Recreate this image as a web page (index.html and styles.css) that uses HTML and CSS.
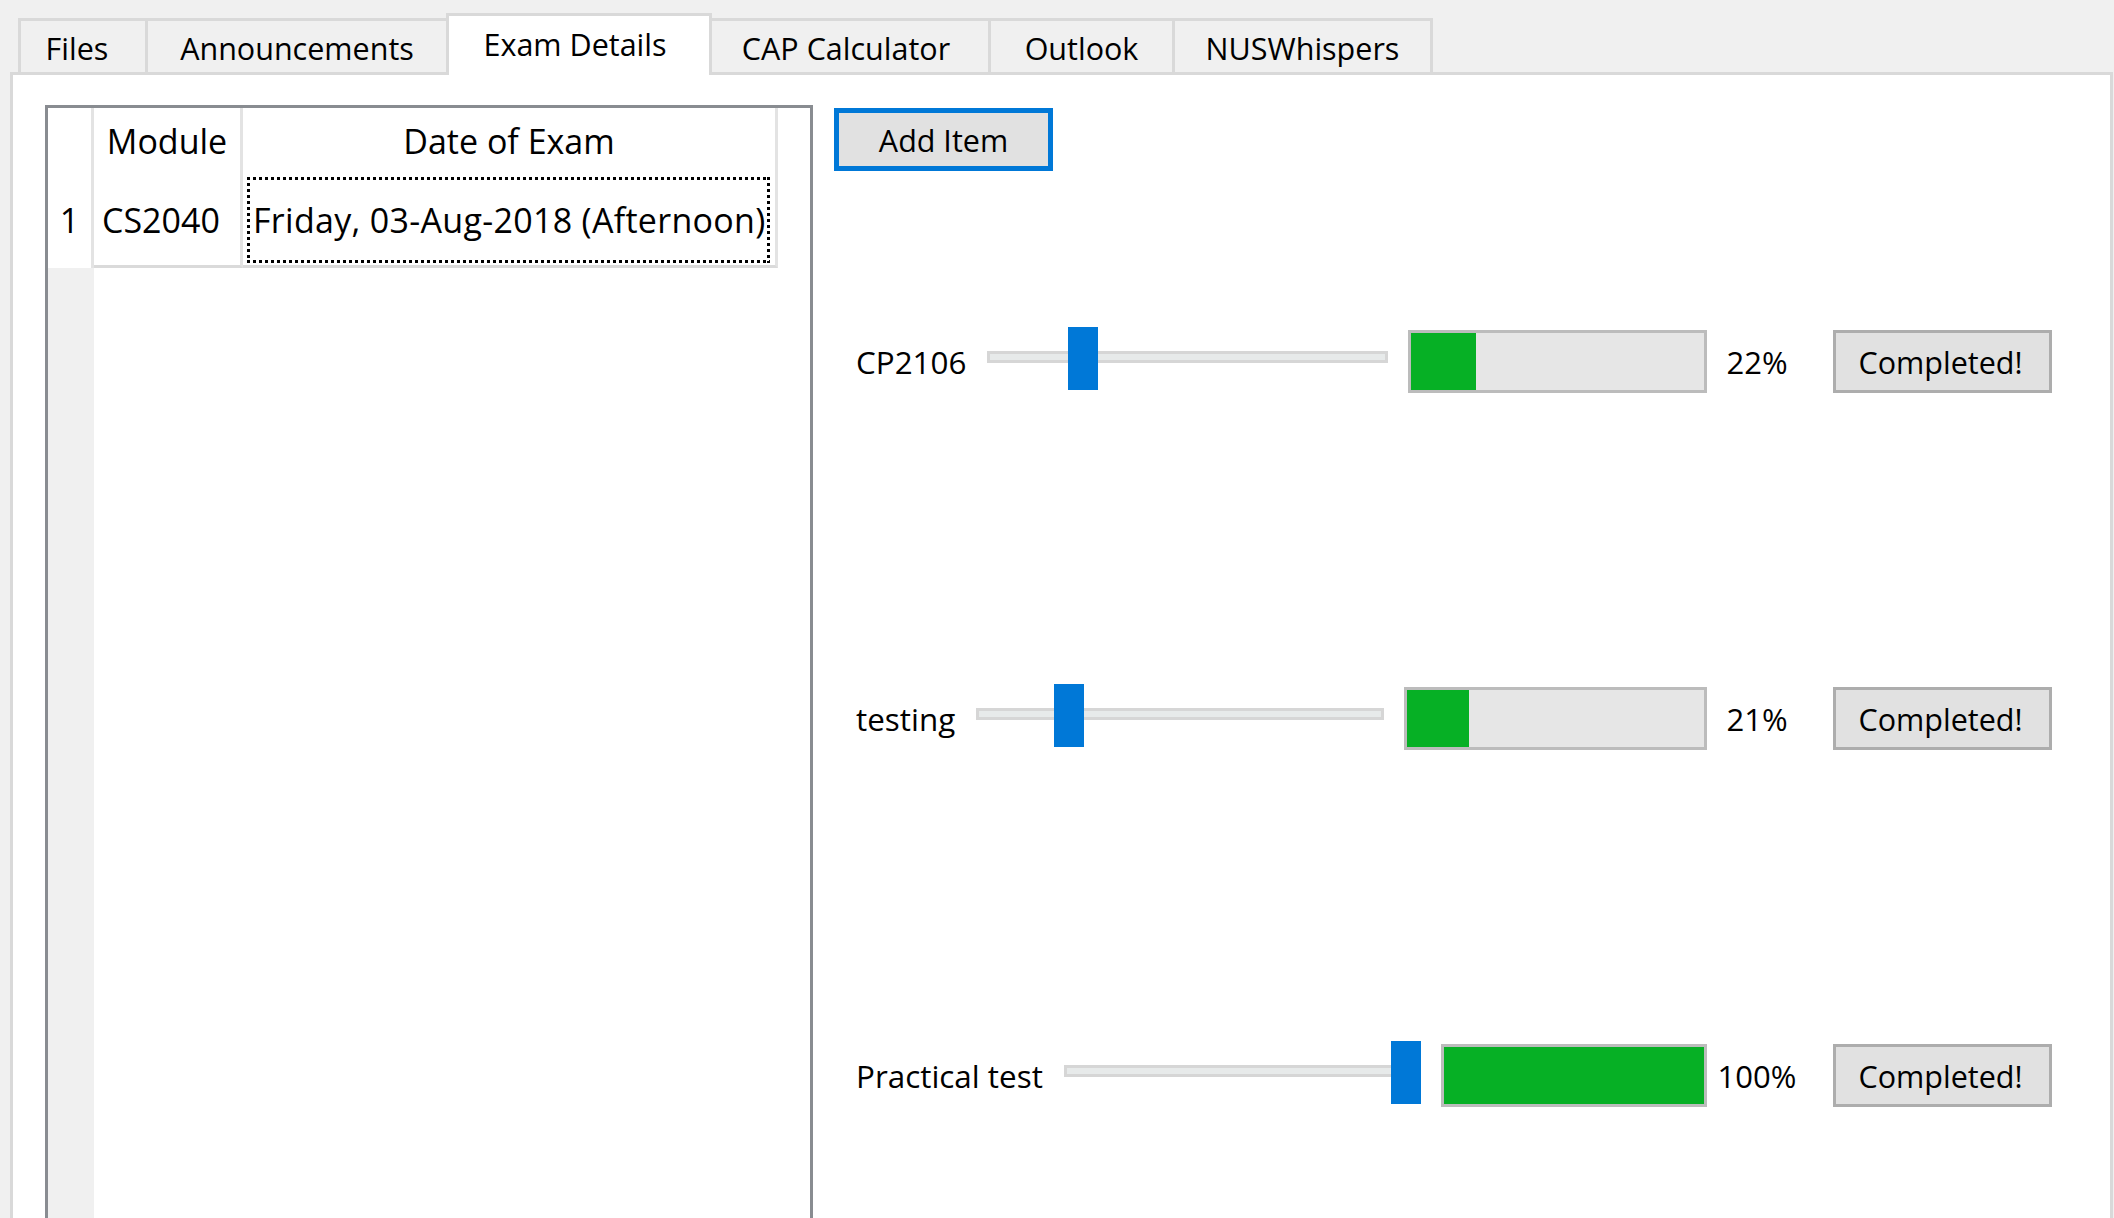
FILE: index.html
```html
<!DOCTYPE html>
<html>
<head>
<meta charset="utf-8">
<title>Exam Details</title>
<link rel="stylesheet" href="styles.css">
</head>
<body>
<div class="tabbar">
  <div class="tab t-files">Files</div>
  <div class="tab t-ann">Announcements</div>
  <div class="tab active t-exam">Exam Details</div>
  <div class="tab t-cap">CAP Calculator</div>
  <div class="tab t-out">Outlook</div>
  <div class="tab t-nus">NUSWhispers</div>
</div>
<div class="panel">
  <div class="table">
    <div class="cell hcell"></div>
    <div class="cell hcell hdr">Module</div>
    <div class="cell hcell hdr">Date of Exam</div>
    <div class="cell"></div>
    <div class="cell hcell vhdr">1</div>
    <div class="cell hcell data mod">CS2040</div>
    <div class="cell hcell data date"><div class="focus">Friday, 03-Aug-2018 (Afternoon)</div></div>
    <div class="cell"></div>
    <div class="cell vfill"></div>
    <div class="cell"></div>
    <div class="cell"></div>
    <div class="cell"></div>
  </div>
  <div class="right">
    <button class="btn add">Add Item</button>
    <div class="rows">
      <div class="row">
        <span class="lbl">CP2106</span>
        <div class="slider" style="--p:0.216"><div class="groove"></div><div class="thumb"></div></div>
        <div class="progress"><div class="chunk" style="width:22%"></div></div>
        <span class="pct">22%</span>
        <button class="btn done">Completed!</button>
      </div>
      <div class="row">
        <span class="lbl">testing</span>
        <div class="slider" style="--p:0.205"><div class="groove"></div><div class="thumb"></div></div>
        <div class="progress"><div class="chunk" style="width:21%"></div></div>
        <span class="pct">21%</span>
        <button class="btn done">Completed!</button>
      </div>
      <div class="row">
        <span class="lbl">Practical test</span>
        <div class="slider" style="--p:1"><div class="groove"></div><div class="thumb"></div></div>
        <div class="progress"><div class="chunk" style="width:100%"></div></div>
        <span class="pct">100%</span>
        <button class="btn done">Completed!</button>
      </div>
    </div>
  </div>
</div>
</body>
</html>
```
FILE: styles.css
```css
html, body {
  margin: 0;
  padding: 0;
}
body {
  width: 2114px;
  height: 1218px;
  overflow: hidden;
  background: #f0f0f0;
  font-family: "Open Sans", "Liberation Sans", sans-serif;
  font-size: 30.5px;
  color: #000;
}

/* ---------- tabs ---------- */
.tabbar {
  display: flex;
  align-items: flex-end;
  height: 72px;
  padding-left: 18px;
}
.tab {
  box-sizing: border-box;
  height: 54px;
  border: 3px solid #d9d9d9;
  border-bottom: 0;
  margin-left: -3px;
  background: #f0f0f0;
  text-align: center;
  line-height: 36px;
  padding-top: 9px;
  white-space: nowrap;
}
.tab:first-child { margin-left: 0; }
.tab.active {
  height: 62px;
  margin-bottom: -3px;
  padding-top: 10px;
  background: #fff;
  position: relative;
  z-index: 2;
}
.t-files { width: 130px; padding-right: 12px; }
.t-ann { width: 304px; }
.t-exam { width: 266px; padding-right: 8px; }
.t-cap { width: 282px; padding-right: 8px; }
.t-out { width: 187px; }
.t-nus { width: 261px; }

/* ---------- panel ---------- */
.panel {
  box-sizing: border-box;
  margin-left: 10px;
  margin-right: 1px;
  height: 1220px;
  border: 3px solid #d9d9d9;
  background: #fff;
  display: flex;
  padding-top: 30px;
  padding-left: 32px;
}

/* ---------- table ---------- */
.table {
  box-sizing: border-box;
  width: 768px;
  flex: none;
  border: 3px solid #898c91;
  display: grid;
  grid-template-columns: 46px 149px 535px 1fr;
  grid-template-rows: 67px 93px 1fr;
  background: #fff;
}
.cell {
  box-sizing: border-box;
  min-width: 0;
}
.hcell {
  border-right: 3px solid #e3e3e3;
}
.hdr {
  font-size: 34px;
  line-height: 67px;
  text-align: center;
  white-space: nowrap;
}
.vhdr {
  font-size: 34px;
  line-height: 90px;
  text-align: center;
}
.data {
  border-bottom: 3px solid #dadada;
  font-size: 34px;
  white-space: nowrap;
}
.mod {
  line-height: 90px;
  padding-left: 8px;
}
.date {
  padding: 2px 5px 2px 4px;
}
.focus {
  box-sizing: border-box;
  height: 86px;
  padding: 3px 0 0 6px;
  line-height: 80px;
  overflow: hidden;
  letter-spacing: 0.3px;
  background:
    repeating-linear-gradient(90deg, #000 0 3px, transparent 3px 6px) top left / 100% 3px no-repeat,
    repeating-linear-gradient(90deg, #000 0 3px, transparent 3px 6px) bottom left / 100% 3px no-repeat,
    repeating-linear-gradient(180deg, #000 0 3px, transparent 3px 6px) top left / 3px 100% no-repeat,
    repeating-linear-gradient(180deg, #000 0 3px, transparent 3px 6px) top right / 3px 100% no-repeat;
}
.vfill {
  background: #f0f0f0;
}

/* ---------- right side ---------- */
.right {
  flex: 1;
  min-width: 0;
  margin-left: 21px;
  padding-top: 3px;
  padding-right: 58px;
  display: flex;
  flex-direction: column;
  align-items: flex-start;
}
.btn {
  box-sizing: border-box;
  width: 219px;
  height: 63px;
  flex: none;
  padding: 0;
  margin: 0;
  background: #e1e1e1;
  font-family: inherit;
  font-size: 30.5px;
  line-height: 40px;
  color: #000;
  text-align: center;
}
.add {
  border: 5px solid #0078d7;
}
.done {
  border: 3px solid #adadad;
  margin-left: 29px;
  padding-right: 4px;
}
.rows {
  align-self: stretch;
  margin-top: 12px;
}
.row {
  height: 357px;
  display: flex;
  align-items: center;
  padding-left: 22px;
}
.lbl {
  flex: none;
  white-space: nowrap;
  font-size: 31.4px;
}
.slider {
  flex: 1.37 1 0;
  min-width: 0;
  height: 63px;
  margin-left: 21px;
  margin-bottom: 6px;
  position: relative;
  display: flex;
  align-items: center;
}
.groove {
  box-sizing: border-box;
  width: 100%;
  height: 12px;
  margin-top: -3px;
  border: 3px solid #d6d6d6;
  background: #e7eaea;
}
.thumb {
  position: absolute;
  top: 0;
  left: calc(var(--p) * (100% - 30px));
  width: 30px;
  height: 63px;
  background: #0078d7;
}
.progress {
  flex: 1 1 0;
  min-width: 0;
  box-sizing: border-box;
  height: 63px;
  margin-left: 20px;
  border: 3px solid #bcbcbc;
  background: #e6e6e6;
}
.chunk {
  height: 100%;
  background: #06b025;
}
.pct {
  flex: none;
  width: 94px;
  margin-left: 3px;
  text-align: center;
  white-space: nowrap;
  font-size: 31px;
}
```
